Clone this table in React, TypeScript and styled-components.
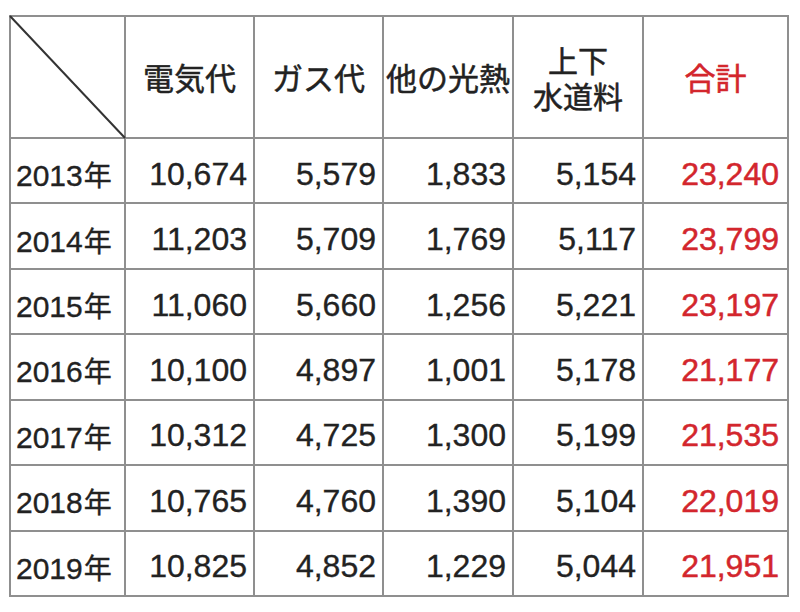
import React from "react";
import styled, { createGlobalStyle } from "styled-components";

const GlobalStyle = createGlobalStyle`
  html, body {
    margin: 0;
    padding: 0;
    background: #ffffff;
  }
  body {
    font-family: "Liberation Sans", Arial, "Noto Sans CJK JP", sans-serif;
  }
`;

const Page = styled.div`
  width: 800px;
  height: 612px;
  padding: 15px 0 0 9px;
  box-sizing: border-box;
  background: #fff;
`;

const Grid = styled.div`
  display: grid;
  grid-template-columns: 113px 127px 127px 128px 128px 143px;
  grid-template-rows: 120px repeat(7, 63.43px);
  gap: 2px;
  padding: 2px;
  width: 780px;
  box-sizing: border-box;
  background: #8f8f8f;
`;

const Cell = styled.div<{ $align?: "left" | "right" | "center"; $red?: boolean }>`
  background: #fff;
  display: flex;
  align-items: center;
  justify-content: ${(p) =>
    p.$align === "left" ? "flex-start" : p.$align === "center" ? "center" : "flex-end"};
  padding: ${(p) =>
    p.$align === "left" ? "7px 0 0 5px" : p.$align === "right" ? (p.$red ? "7px 8px 0 0" : "7px 6px 0 0") : "0"};
  font-family: "Liberation Sans", Arial, "Noto Sans CJK JP", sans-serif;
  font-size: 32px;
  color: ${(p) => (p.$red ? "#d3262d" : "#222")};
  -webkit-text-stroke: ${(p) => (p.$red ? "0.5px #d3262d" : "0.35px #222")};
  white-space: nowrap;
  overflow: hidden;
`;

const HeadCell = styled(Cell)`
  flex-direction: column;
  justify-content: center;
  align-items: center;
  font-family: "Noto Sans CJK JP", sans-serif;
  font-size: 31px;
  line-height: 36px;
  padding: 0;
  -webkit-text-stroke: ${(p) => (p.$red ? "0.6px #d3262d" : "0.5px #222")};
`;

const HeadLine = styled.span`
  display: block;
  font-size: 30px;
  line-height: 36px;
`;

const CornerCell = styled.div`
  background: #fff;
`;

const Diagonal = styled.svg`
  display: block;
  width: 100%;
  height: 100%;
  overflow: visible;
`;

const YearText = styled.span`
  display: inline-flex;
  align-items: baseline;
  font-size: 30px;
`;

const Nen = styled.span`
  font-family: "Noto Sans CJK JP", sans-serif;
  font-size: 28px;
  margin-left: 1px;
`;

const rows: [string, string, string, string, string, string][] = [
  ["2013", "10,674", "5,579", "1,833", "5,154", "23,240"],
  ["2014", "11,203", "5,709", "1,769", "5,117", "23,799"],
  ["2015", "11,060", "5,660", "1,256", "5,221", "23,197"],
  ["2016", "10,100", "4,897", "1,001", "5,178", "21,177"],
  ["2017", "10,312", "4,725", "1,300", "5,199", "21,535"],
  ["2018", "10,765", "4,760", "1,390", "5,104", "22,019"],
  ["2019", "10,825", "4,852", "1,229", "5,044", "21,951"],
];

export default function App() {
  return (
    <>
      <GlobalStyle />
      <Page>
        <Grid>
          <CornerCell>
            <Diagonal viewBox="0 0 113 120" preserveAspectRatio="none">
              <line x1="-1" y1="-1" x2="114" y2="121" stroke="#333" strokeWidth="2" />
            </Diagonal>
          </CornerCell>
          <HeadCell $align="center">電気代</HeadCell>
          <HeadCell $align="center">ガス代</HeadCell>
          <HeadCell $align="center">他の光熱</HeadCell>
          <HeadCell $align="center">
            <HeadLine>上下</HeadLine>
            <HeadLine>水道料</HeadLine>
          </HeadCell>
          <HeadCell $align="center" $red>
            合計
          </HeadCell>
          {rows.map((r) => (
            <React.Fragment key={r[0]}>
              <Cell $align="left">
                <YearText>
                  {r[0]}
                  <Nen>年</Nen>
                </YearText>
              </Cell>
              <Cell $align="right">{r[1]}</Cell>
              <Cell $align="right">{r[2]}</Cell>
              <Cell $align="right">{r[3]}</Cell>
              <Cell $align="right">{r[4]}</Cell>
              <Cell $align="right" $red>
                {r[5]}
              </Cell>
            </React.Fragment>
          ))}
        </Grid>
      </Page>
    </>
  );
}
